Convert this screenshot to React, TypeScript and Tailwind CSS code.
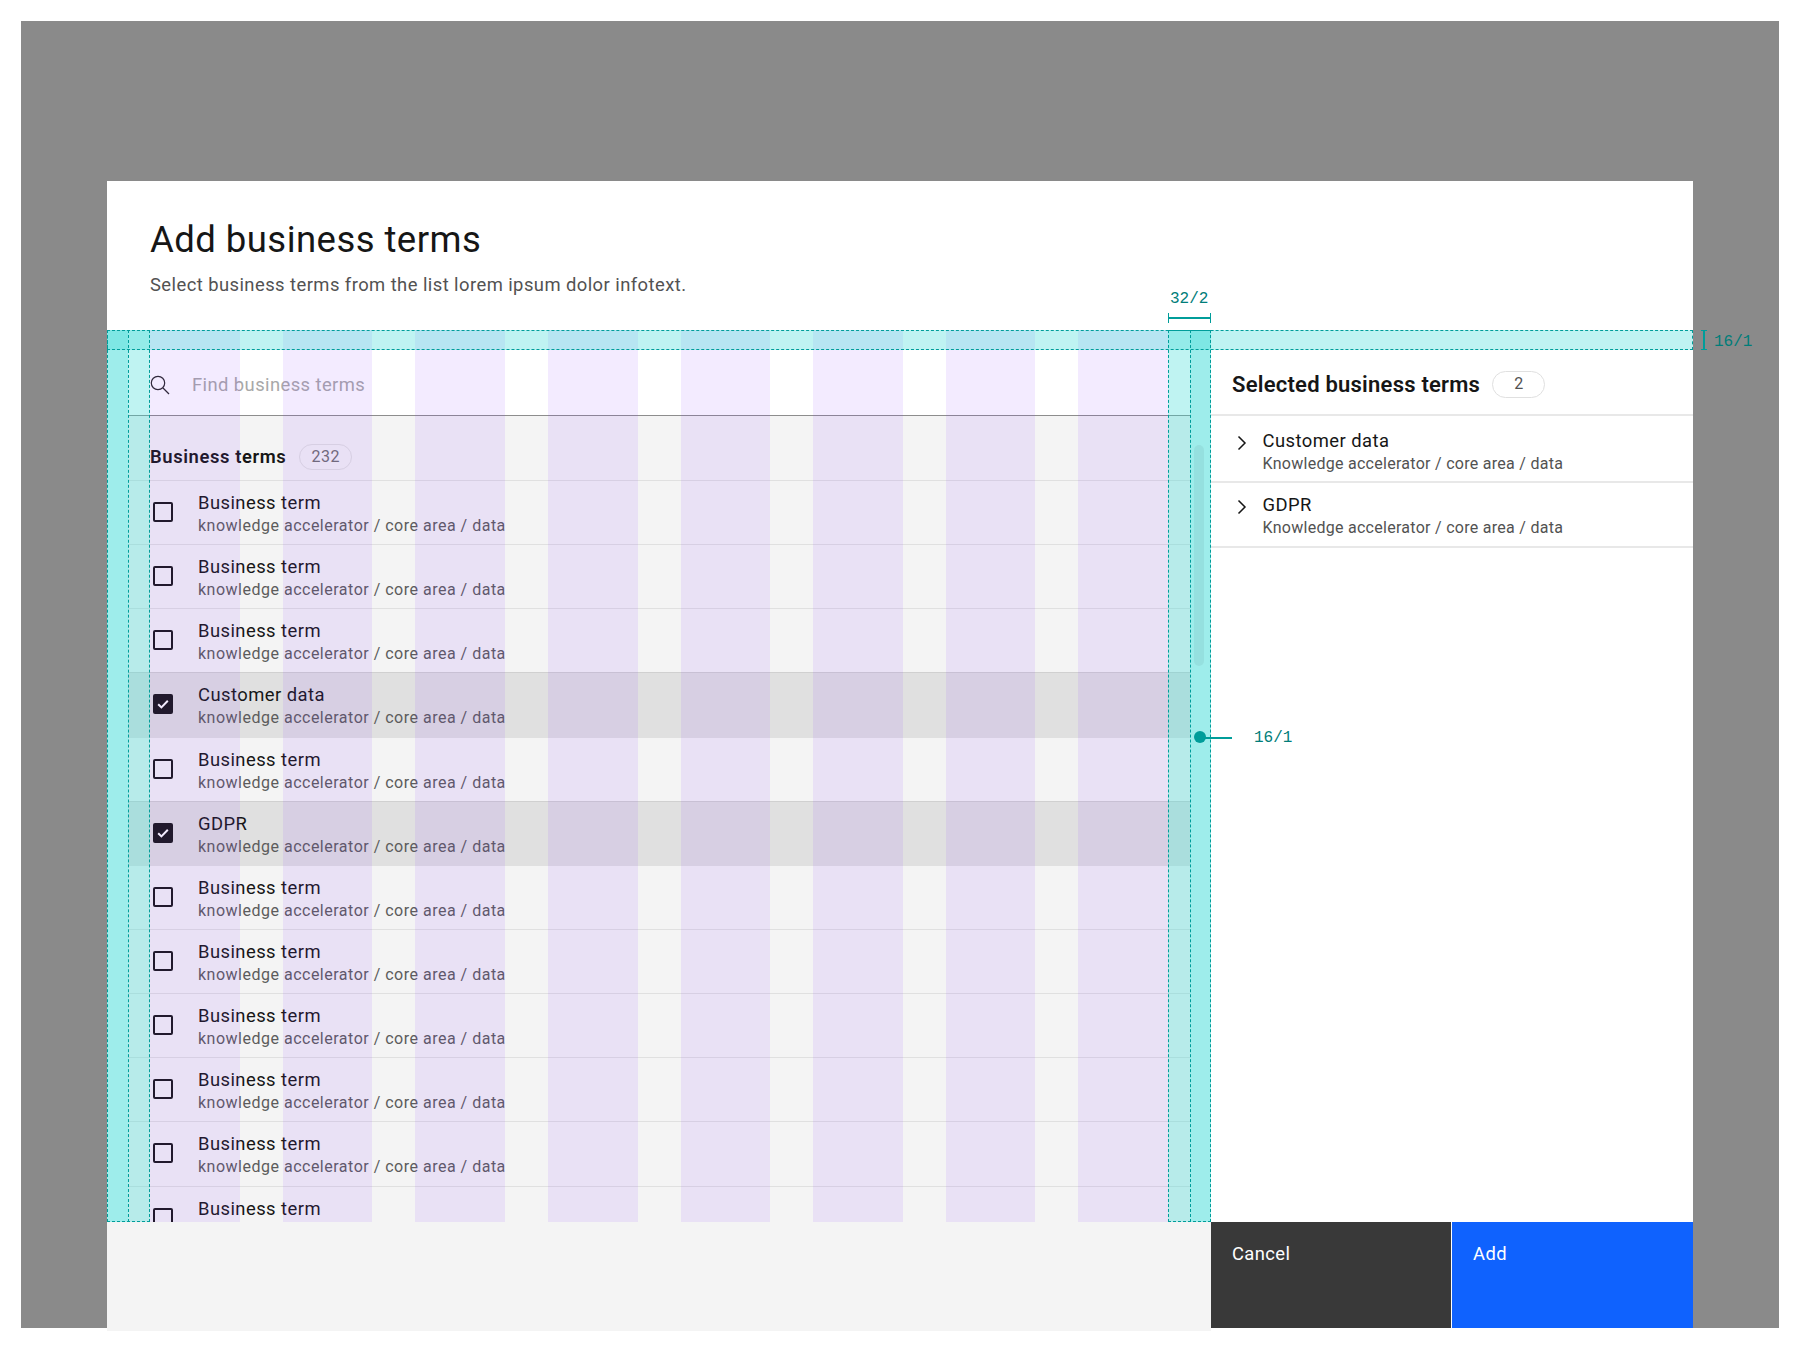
const terms = [
  { name: "Business term" },
  { name: "Business term" },
  { name: "Business term" },
  { name: "Customer data", checked: true },
  { name: "Business term" },
  { name: "GDPR", checked: true },
  { name: "Business term" },
  { name: "Business term" },
  { name: "Business term" },
  { name: "Business term" },
  { name: "Business term" },
  { name: "Business term" },
];

const columns = [0, 1, 2, 3, 4, 5, 6, 7];

const Checkbox = ({ checked }: { checked?: boolean }) =>
  checked ? (
    <div className="w-5 h-5 shrink-0 rounded-[2px] bg-[#161616] flex items-center justify-center">
      <svg width="16" height="16" viewBox="0 0 16 16" fill="none">
        <path d="M3.2 8.2l3.2 3.2 6.4-6.6" stroke="#fff" strokeWidth="2" />
      </svg>
    </div>
  ) : (
    <div className="w-5 h-5 shrink-0 rounded-[2px] border-2 border-[#161616]" />
  );

const TermRow = ({ name, checked }: { name: string; checked?: boolean }) => (
  <div
    className={`h-[64.15px] shrink-0 flex pl-[25px] border-t ${
      checked ? "bg-[#e0e0e0] border-[#d0d0d0]" : "border-[#e0e0e0]"
    }`}
  >
    <div className="pt-[21px]">
      <Checkbox checked={checked} />
    </div>
    <div className="ml-[25px] pt-[10px]">
      <div className="text-[18.4px] leading-[24px] tracking-[0.45px] text-[#161616]">
        {name}
      </div>
      <div className="text-[16px] leading-[21px] tracking-[0.5px] text-[#5c5c5c]">
        knowledge accelerator / core area / data
      </div>
    </div>
  </div>
);

const SelectedRow = ({ name, first }: { name: string; first?: boolean }) => (
  <div
    className={`flex border-b-2 border-[#e8e8e8] pl-[26px] ${
      first ? "h-[66.5px]" : "h-[65px]"
    }`}
  >
    <svg
      className={`shrink-0 ${first ? "mt-[19px]" : "mt-[16.5px]"}`}
      width="10"
      height="16"
      viewBox="0 0 10 16"
      fill="none"
    >
      <path d="M1.5 1.5L8 8l-6.5 6.5" stroke="#161616" strokeWidth="1.5" />
    </svg>
    <div className={`ml-[15.5px] ${first ? "pt-[13px]" : "pt-[10.5px]"}`}>
      <div className="text-[18.4px] leading-[24px] tracking-[0.45px] text-[#161616]">{name}</div>
      <div className="text-[16px] leading-[22px] tracking-[0.28px] text-[#525252]">
        Knowledge accelerator / core area / data
      </div>
    </div>
  </div>
);

// redline overlay, the grid and spacing marks drawn over the dialog
const Redlines = () => (
  <div className="absolute inset-0 pointer-events-none">
    <div className="absolute left-[43px] top-0 bottom-0 w-[1018px] grid grid-cols-8 gap-[43px]">
      {columns.map((c) => (
        <div key={c} className="bg-[rgba(138,63,252,0.1)]" />
      ))}
    </div>
    <div className="absolute left-0 top-0 bottom-0 w-[43px] bg-[rgba(61,219,217,0.33)]" />
    <div className="absolute left-0 top-0 bottom-0 w-[21px] bg-[rgba(61,219,217,0.25)]" />
    <div className="absolute left-[1061px] top-0 bottom-0 w-[43px] bg-[rgba(61,219,217,0.33)]" />
    <div className="absolute left-[1083px] top-0 bottom-0 w-[21px] bg-[rgba(61,219,217,0.25)]" />
    <div className="absolute left-0 top-0 w-[1586px] h-[20px] bg-[rgba(61,219,217,0.33)]" />
    <div className="absolute left-0 top-0 w-[1586px] h-[20px] border border-dashed border-[#009d9a]" />
    <div className="absolute left-0 top-0 bottom-0 w-[43px] border border-dashed border-[#009d9a]" />
    <div className="absolute left-[21px] top-0 bottom-0 border-l border-dashed border-[#009d9a]" />
    <div className="absolute left-[1061px] top-0 bottom-0 w-[43px] border border-dashed border-[#009d9a]" />
    <div className="absolute left-[1083px] top-0 bottom-0 border-l border-dashed border-[#009d9a]" />
    <div className="absolute left-[1087px] top-[115px] w-[10px] h-[221px] rounded-full bg-[rgba(0,0,0,0.05)]" />

    <div className="absolute left-[1087px] top-[401px] w-3 h-3 rounded-full bg-[#009d9a]" />
    <div className="absolute left-[1097px] top-[407px] w-[28px] h-[1.5px] bg-[#009d9a]" />
    <div className="absolute left-[1147px] top-[397px] font-['Liberation_Mono',monospace] text-[16px] leading-[22px] text-[#007d79]">
      16/1
    </div>

    <div className="absolute left-[1061px] top-[-17px] w-[43px] h-[10px] flex items-center border-x border-[#009d9a]">
      <div className="w-full h-[1.5px] bg-[#009d9a]" />
    </div>
    <div className="absolute left-[1063px] top-[-42px] font-['Liberation_Mono',monospace] text-[16px] leading-[22px] text-[#007d79]">
      32/2
    </div>

    <div className="absolute left-[1594px] top-0 h-[20px] w-[6px] flex justify-center border-y border-[#009d9a]">
      <div className="w-[1.5px] h-full bg-[#009d9a]" />
    </div>
    <div className="absolute left-[1607px] top-px font-['Liberation_Mono',monospace] text-[16px] leading-[22px] text-[#007d79]">
      16/1
    </div>
  </div>
);

export default function App() {
  return (
    <div className="w-[1800px] h-[1350px] bg-white pt-[21px] pl-[21px] font-['Roboto',sans-serif] overflow-hidden">
      <div className="w-[1758px] h-[1307px] bg-[#8a8a8a] pt-[160px] pl-[86px]">
        <div className="w-[1586px] bg-white flex flex-col">
          <div className="h-[149px] pl-[43px] pt-[35px]">
            <h1 className="text-[36.5px] leading-[48px] tracking-[0.45px] text-[#161616]">
              Add business terms
            </h1>
            <p className="mt-[9px] text-[18.4px] leading-[24px] tracking-[0.44px] text-[#525252]">
              Select business terms from the list lorem ipsum dolor infotext.
            </p>
          </div>

          <div className="relative h-[892px] flex">
            <div className="w-[1104px] pt-[20px] pr-[21px] pl-[21px] flex flex-col">
              <div className="h-[66px] shrink-0 flex items-center border-b border-[#8d8d8d] pl-[22px] pt-[4px]">
                <svg width="20" height="20" viewBox="0 0 20 20" fill="none">
                  <circle cx="8" cy="8" r="6.7" stroke="#262626" strokeWidth="1.2" />
                  <path d="M13 13l6 6" stroke="#262626" strokeWidth="1.2" />
                </svg>
                <span className="ml-[22px] text-[18.4px] tracking-[0.42px] text-[#a8a8a8]">
                  Find business terms
                </span>
              </div>
              <div className="flex-1 bg-[#f4f4f4] flex flex-col overflow-hidden">
                <div className="h-[64px] shrink-0 flex items-center pl-[22px] pt-[18px]">
                  <span className="text-[18.4px] font-semibold tracking-[0.6px] text-[#161616]">
                    Business terms
                  </span>
                  <span className="ml-[13px] w-[53px] h-[26px] rounded-full border border-[#e0e0e0] flex items-center justify-center text-[16px] tracking-[0.5px] text-[#6f6f6f]">
                    232
                  </span>
                </div>
                {terms.map((t, i) => (
                  <TermRow key={i} name={t.name} checked={t.checked} />
                ))}
              </div>
            </div>

            <div className="w-[482px] pt-[20px] flex flex-col">
              <div className="h-[66px] shrink-0 flex items-center border-b-2 border-[#e8e8e8] pl-[21px] pt-[4px]">
                <span className="text-[22px] font-semibold tracking-[0.23px] text-[#161616]">
                  Selected business terms
                </span>
                <span className="ml-[12px] w-[53px] h-[27px] rounded-full border border-[#e0e0e0] flex items-center justify-center text-[16px] text-[#525252]">
                  2
                </span>
              </div>
              <SelectedRow name="Customer data" first />
              <SelectedRow name="GDPR" />
            </div>

            <Redlines />
          </div>

          <div className="h-[109px] flex items-start">
            <div className="w-[1104px] h-[109px] bg-[#f4f4f4]" />
            <button className="w-[240px] h-[106px] bg-[#393939] text-white text-left text-[18.4px] leading-[24px] tracking-[0.4px] pl-[21px] pt-[20px] flex items-start">
              Cancel
            </button>
            <button className="ml-[1px] w-[241px] h-[106px] bg-[#0f62fe] text-white text-left text-[18.4px] leading-[24px] tracking-[0.4px] pl-[21px] pt-[20px] flex items-start">
              Add
            </button>
          </div>
        </div>
      </div>
    </div>
  );
}
